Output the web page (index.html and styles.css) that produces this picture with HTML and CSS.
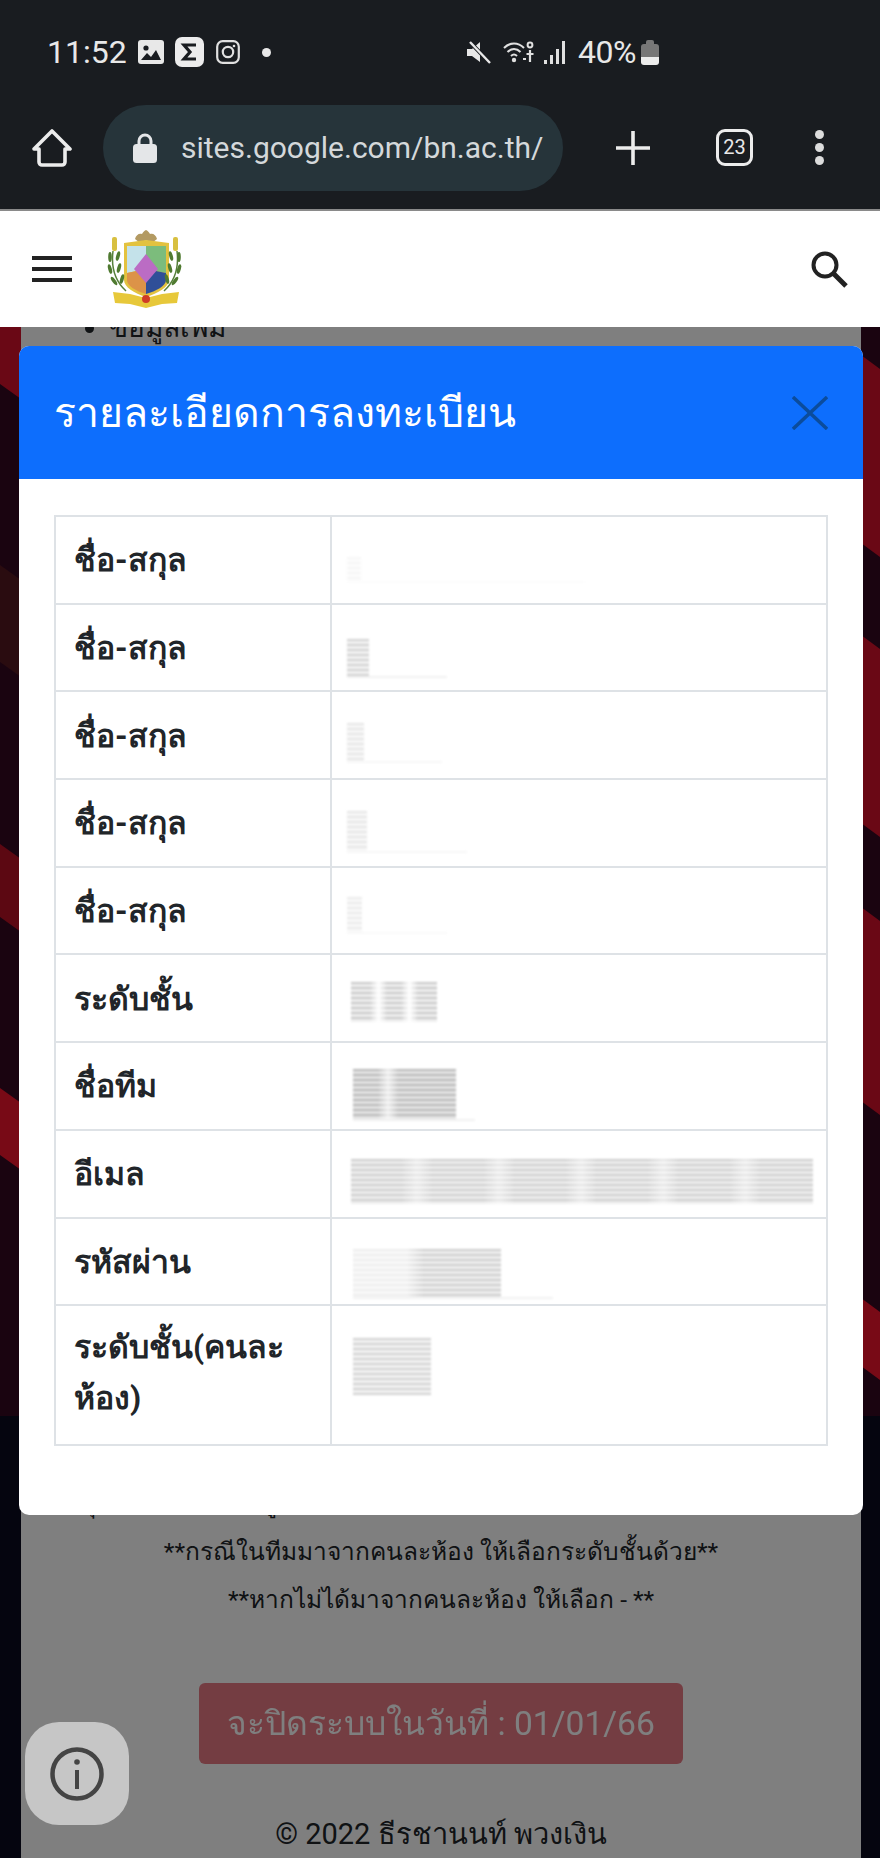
FILE: index.html
```html
<!DOCTYPE html>
<html>
<head>
    <title>รายละเอียดการลงทะเบียน</title>
    <meta charset="utf-8">
    <link rel="stylesheet" href="styles.css">
</head>
<body>
    <div class="chrome">
        <div class="status">
            <span class="time">11:52</span>
            <svg class="ic-gallery" viewBox="0 0 26 24"><rect width="26" height="24" rx="3" fill="#e8e8e8"/><circle cx="8" cy="8" r="2.6" fill="#191c20"/><path d="M3 20l6-7 4 4 5-7 5 10z" fill="#191c20"/></svg>
            <svg class="ic-sigma" viewBox="0 0 29 30"><rect width="29" height="30" rx="7" fill="#ececec"/><path d="M21 8H9l6 7-6 7h12" fill="none" stroke="#191c20" stroke-width="3.2"/></svg>
            <svg class="ic-insta" viewBox="0 0 24 24"><rect x="1.2" y="1.2" width="21.6" height="21.6" rx="5.5" fill="none" stroke="#e0e0e0" stroke-width="2.2"/><circle cx="12" cy="12" r="5.2" fill="none" stroke="#e0e0e0" stroke-width="2.2"/><circle cx="18" cy="6" r="1.3" fill="#e0e0e0"/></svg>
            <span class="dot"></span>
            <svg class="ic-mute" viewBox="0 0 25 23"><path d="M1 8h5l8-7v20l-8-6H1z" fill="#e8e8e8"/><path d="M3 0l21 22" stroke="#191c20" stroke-width="4"/><path d="M4 1l20 21" stroke="#e8e8e8" stroke-width="2.4"/></svg>
            <svg class="ic-wifi" viewBox="0 0 32 22"><g fill="none" stroke="#e0e0e0" stroke-width="2"><path d="M1 7c6-6 14-6 20 0"/><path d="M4.500 11c4-4 9-4 13 0"/><path d="M8 15c2-2 4-2 6 0"/><circle cx="27" cy="4" r="2.400"/></g><circle cx="11" cy="19" r="2.200" fill="#e0e0e0"/><path d="M27 9v12M23.500 13h7M20 18h3" stroke="#e0e0e0" stroke-width="2.200"/></svg>
            <svg class="ic-signal" viewBox="0 0 23 23"><path d="M1 19h3v4H1zM7 14h3v9H7zM13 8h3v15h-3zM19 0h3v23h-3z" fill="#e0e0e0"/></svg>
            <span class="level">40%</span>
            <span class="battery"></span>
        </div>
        <div class="toolbar">
            <svg class="ic-home" viewBox="0 0 40 38"><path d="M2 20L20 2l18 18h-5v13a3 3 0 0 1-3 3H10a3 3 0 0 1-3-3V20z" fill="none" stroke="#ececec" stroke-width="3.600" stroke-linejoin="round"/></svg>
            <div class="url">
                <svg class="ic-lock" viewBox="0 0 24 30"><path d="M6 13V8a6 6 0 0 1 12 0v5" fill="none" stroke="#e4e6e8" stroke-width="3"/><rect y="11" width="24" height="19" rx="3.500" fill="#e4e6e8"/></svg>
                <span>sites.google.com/bn.ac.th/</span>
            </div>
            <svg class="ic-plus" viewBox="0 0 34 34"><path d="M17 0v34M0 17h34" stroke="#ececec" stroke-width="3.600"/></svg>
            <div class="tabs">23</div>
            <div class="more"><span></span><span></span><span></span></div>
        </div>
    </div>

    <header class="site-header">
        <div class="burger"><span></span><span></span><span></span></div>
        <svg class="crest" viewBox="0 0 75 80">
            <path d="M39 1c-2 1-3 2-4 4-3-1-6 1-7 5l5 4 6-3 6 3 5-4c-1-4-4-6-7-5-1-2-2-3-4-4z" fill="#b39a62"/>
            <path d="M17 14l22-3 23 3v37c0 7-11 13-23 17-12-4-22-10-22-17z" fill="#e3c23f"/>
            <path d="M20 17h19v23L20 44z" fill="#c4e2ea"/>
            <path d="M39 17h20v27l-20-4z" fill="#7cbc7c"/>
            <path d="M20 44l19-4v25c-10-3-19-8-19-14z" fill="#dc9348"/>
            <path d="M39 40l20 4v7c0 6-10 11-20 14z" fill="#2f4f98"/>
            <path d="M39 25l12 15-12 14-12-14z" fill="#bb6cc4"/>
            <g fill="none" stroke="#56803a" stroke-width="1.500">
                <path d="M6 22c-2 16 2 30 13 40"/>
                <path d="M70 22c2 16-2 30-13 40"/>
            </g>
            <g fill="#4f7a30">
                <ellipse cx="3" cy="28" rx="1.800" ry="5"/><ellipse cx="11" cy="27" rx="1.800" ry="5" transform="rotate(15 11 27)"/>
                <ellipse cx="3" cy="40" rx="1.800" ry="5" transform="rotate(-15 3 40)"/><ellipse cx="12" cy="39" rx="1.800" ry="5" transform="rotate(15 12 39)"/>
                <ellipse cx="7" cy="52" rx="1.800" ry="5" transform="rotate(-35 7 52)"/><ellipse cx="15" cy="50" rx="1.800" ry="5" transform="rotate(15 15 50)"/>
                <ellipse cx="72" cy="28" rx="1.800" ry="5"/><ellipse cx="64" cy="27" rx="1.800" ry="5" transform="rotate(-15 64 27)"/>
                <ellipse cx="72" cy="40" rx="1.800" ry="5" transform="rotate(15 72 40)"/><ellipse cx="63" cy="39" rx="1.800" ry="5" transform="rotate(-15 63 39)"/>
                <ellipse cx="68" cy="52" rx="1.800" ry="5" transform="rotate(35 68 52)"/><ellipse cx="60" cy="50" rx="1.800" ry="5" transform="rotate(-15 60 50)"/>
            </g>
            <rect x="5" y="8" width="5" height="14" rx="2" fill="#d8c040"/>
            <rect x="66" y="8" width="5" height="14" rx="2" fill="#d8c040"/>
            <path d="M6 63l17 2 16 4 16-4 17-2-2 11-15 1-16 4-16-4-15-1z" fill="#e7c83a"/>
            <circle cx="39" cy="70" r="4" fill="#cf3b26"/>
        </svg>
        <svg class="ic-search" viewBox="0 0 38 38"><circle cx="15" cy="15" r="11.500" fill="none" stroke="#222" stroke-width="4"/><path d="M23 23l13 13" stroke="#222" stroke-width="5"/></svg>
    </header>

    <div class="page">
        <svg class="bands" viewBox="0 0 880 1531">
            <rect width="880" height="1089" fill="#340820"/>
            <rect y="1089" width="880" height="442" fill="#0a0a1e"/>
            <path d="M0 0h21v72L0 57z" fill="#d4102a"/>
            <path d="M0 238l21 15v97l-21-15z" fill="#541820"/>
            <path d="M0 517l21 15v73l-21-15z" fill="#b81024"/>
            <path d="M0 761l21 15v67l-21-15z" fill="#f0142c"/>
            <path d="M861 28l19 14v188l-19-14z" fill="#d4102a"/>
            <path d="M861 308l19 14v188l-19-14z" fill="#d4102a"/>
            <path d="M861 580l19 14v194l-19-14z" fill="#d4102a"/>
            <path d="M861 971l19 14v68l-19-14z" fill="#f0142c"/>
        </svg>
        <div class="card">
            <ul class="extra">
                <li>ข้อมูลเพิ่ม</li>
            </ul>
            <div class="notes">
                <p>ทุกคนในทีมต้องอยู่ในระดับชั้นเดียวกันและมาจากห้องเดียวกันทั้งหมด</p>
                <p>**กรณีในทีมมาจากคนละห้อง ให้เลือกระดับชั้นด้วย**</p>
                <p>**หากไม่ได้มาจากคนละห้อง ให้เลือก - **</p>
            </div>
            <div class="closing">จะปิดระบบในวันที่ : 01/01/66</div>
            <footer class="copy">© 2022 ธีรชานนท์ พวงเงิน</footer>
        </div>
        <div class="backdrop"></div>

        <div class="modal">
            <div class="modal-head">
                <h1>รายละเอียดการลงทะเบียน</h1>
                <svg class="ic-close" viewBox="0 0 36 34"><path d="M1 1l34 32M35 1L1 33" stroke="#0b4c9c" stroke-width="3.400"/></svg>
            </div>
            <div class="modal-body">
                <table>
                    <tr><th>ชื่อ-สกุล</th><td><div class="smear s1"></div></td></tr>
                    <tr><th>ชื่อ-สกุล</th><td><div class="smear s2"></div></td></tr>
                    <tr><th>ชื่อ-สกุล</th><td><div class="smear s3"></div></td></tr>
                    <tr><th>ชื่อ-สกุล</th><td><div class="smear s4"></div></td></tr>
                    <tr><th>ชื่อ-สกุล</th><td><div class="smear s5"></div></td></tr>
                    <tr><th>ระดับชั้น</th><td><div class="smear s6"></div></td></tr>
                    <tr><th>ชื่อทีม</th><td><div class="smear s7"></div></td></tr>
                    <tr><th>อีเมล</th><td><div class="smear s8"></div></td></tr>
                    <tr><th>รหัสผ่าน</th><td><div class="smear s9"></div></td></tr>
                    <tr class="tall"><th>ระดับชั้น(คนละ<br>ห้อง)</th><td><div class="smear s10"></div></td></tr>
                </table>
            </div>
        </div>

        <div class="info">
            <svg viewBox="0 0 54 54"><circle cx="27" cy="27" r="24.500" fill="none" stroke="#444" stroke-width="4.500"/><circle cx="27" cy="15" r="2.800" fill="#444"/><path d="M27 23v19" stroke="#444" stroke-width="4"/></svg>
        </div>
    </div>
</body>
</html>
```

FILE: styles.css
```css
body {
    margin: 0;
    width: 880px;
    height: 1858px;
    overflow: hidden;
    display: flex;
    flex-direction: column;
    font-family: Roboto, "Noto Sans", "DejaVu Sans", sans-serif;
    color: #212529;
}

/* phone status bar and browser toolbar */
.chrome {
    height: 209px;
    flex: none;
    background-color: #191c20;
    color: #e8e8e8;
}
.status {
    height: 104px;
    box-sizing: border-box;
    padding-left: 47px;
    display: flex;
    align-items: center;
}
.time {
    width: 91px;
    font-size: 32px;
}
.ic-gallery { width: 26px; height: 24px; }
.ic-sigma { width: 29px; height: 30px; margin-left: 11px; }
.ic-insta { width: 24px; height: 24px; margin-left: 12px; }
.dot {
    width: 9px;
    height: 9px;
    margin-left: 22px;
    border-radius: 50%;
    background-color: #e8e8e8;
}
.ic-mute { width: 25px; height: 23px; margin-left: 195px; }
.ic-wifi { width: 32px; height: 22px; margin-left: 12px; }
.ic-signal { width: 23px; height: 23px; margin-left: 8px; }
.level {
    margin-left: 12px;
    font-size: 32px;
    letter-spacing: -0.5px;
}
.battery {
    position: relative;
    width: 18px;
    height: 21px;
    margin-top: 4px;
    margin-left: 5px;
    border-radius: 3px;
    background: linear-gradient(#777 62%, #ececec 62%);
}
.battery::before {
    content: "";
    position: absolute;
    top: -4px;
    left: 5px;
    width: 8px;
    height: 4px;
    border-radius: 2px 2px 0 0;
    background-color: #777;
}
.toolbar {
    height: 105px;
    display: flex;
    align-items: center;
}
.ic-home { width: 40px; height: 38px; margin-left: 32px; margin-top: -18px; }
.url {
    width: 460px;
    height: 86px;
    margin-top: -18px;
    margin-left: 31px;
    box-sizing: border-box;
    padding-left: 30px;
    display: flex;
    align-items: center;
    gap: 24px;
    border-radius: 43px;
    background-color: #26343a;
    font-size: 30px;
    color: #d4d8da;
    white-space: nowrap;
}
.ic-lock { width: 24px; height: 30px; }
.ic-plus { width: 34px; height: 34px; margin-left: 53px; margin-top: -18px; }
.tabs {
    width: 37px;
    height: 37px;
    margin-left: 66px;
    margin-top: -18px;
    box-sizing: border-box;
    border: 3.5px solid #ececec;
    border-radius: 9px;
    font-size: 20px;
    line-height: 30px;
    text-align: center;
}
.more {
    margin-left: 62px;
    margin-top: -18px;
    display: flex;
    flex-direction: column;
    gap: 4px;
}
.more span {
    width: 9px;
    height: 9px;
    border-radius: 50%;
    background-color: #dcdcdc;
}

/* site header */
.site-header {
    height: 118px;
    flex: none;
    box-sizing: border-box;
    border-top: 2px solid #8a8a8a;
    padding: 0 32px;
    display: flex;
    align-items: center;
    background-color: #fff;
    position: relative;
    z-index: 3;
}
.burger {
    width: 40px;
    display: flex;
    flex-direction: column;
    gap: 7px;
}
.burger span {
    height: 4px;
    background-color: #222;
}
.crest {
    width: 75px;
    height: 80px;
    margin-left: 35px;
    filter: blur(0.7px);
}
.ic-search {
    width: 38px;
    height: 38px;
    margin-left: auto;
}

/* page behind the dialog */
.page {
    flex: 1;
    position: relative;
    overflow: hidden;
}
.bands {
    position: absolute;
    top: 0;
    left: 0;
    width: 880px;
    height: 1531px;
}
.card {
    position: absolute;
    top: 0;
    bottom: 0;
    left: 21px;
    width: 840px;
    display: flex;
    flex-direction: column;
    align-items: center;
    background-color: #fff;
}
.extra {
    align-self: flex-start;
    margin: -17px 0 0;
    padding-left: 88px;
    font-size: 28px;
    line-height: 36px;
}
.notes {
    margin-top: auto;
    font-size: 24.5px;
    line-height: 48px;
    text-align: center;
    white-space: nowrap;
}
.notes p {
    margin: 0;
}
.closing {
    height: 81px;
    margin-top: 59px;
    padding: 0 28px;
    border-radius: 6px;
    background-color: #dc3545;
    opacity: 0.65;
    color: #fff;
    font-size: 33.6px;
    line-height: 81px;
}
.copy {
    margin-top: 46px;
    font-size: 29px;
    line-height: 48px;
}
.backdrop {
    position: absolute;
    top: 0;
    right: 0;
    bottom: 0;
    left: 0;
    background-color: rgba(0, 0, 0, 0.5);
}

/* dialog */
.modal {
    position: absolute;
    top: 19px;
    left: 19px;
    width: 844px;
    border-radius: 10px;
    overflow: hidden;
    background-color: #fff;
}
.modal-head {
    height: 133px;
    box-sizing: border-box;
    padding: 0 35px;
    display: flex;
    align-items: center;
    justify-content: space-between;
    background-color: #0d6efd;
}
.modal-head h1 {
    margin: 0;
    font-size: 41px;
    font-weight: 400;
    color: #fff;
}
.ic-close {
    width: 36px;
    height: 34px;
}
.modal-body {
    padding: 36px 35px 69px;
}
table {
    width: 100%;
    border-collapse: collapse;
    table-layout: fixed;
}
th, td {
    height: 87.7px;
    box-sizing: border-box;
    border: 2px solid #dee2e6;
    padding: 0 0 0 18px;
}
th {
    width: 276px;
    padding-top: 2px;
    font-size: 32px;
    font-weight: 700;
    line-height: 51px;
    text-align: left;
}
td {
    padding-left: 15px;
    vertical-align: top;
}
.tall th, .tall td {
    height: 140px;
}
.tall th {
    vertical-align: top;
    padding-top: 16px;
}

/* redacted values */
.smear {
    position: relative;
    filter: blur(1.1px);
    background: repeating-linear-gradient(#d2d2d2 0 2px, #f2f2f2 2px 5px);
}
.smear::after {
    content: "";
    position: absolute;
    left: 0;
    bottom: 0;
    height: 2px;
    background-color: #f1f1f1;
}
.s1 { width: 14px; height: 26px; margin-top: 40px; opacity: 0.2; }
.s1::after { width: 238px; }
.s2 { width: 22px; height: 39px; margin-top: 34px; }
.s2::after { width: 100px; }
.s3 { width: 17px; height: 40px; margin-top: 31px; opacity: 0.55; }
.s3::after { width: 95px; }
.s4 { width: 20px; height: 42px; margin-top: 31px; opacity: 0.55; }
.s4::after { width: 120px; }
.s5 { width: 15px; height: 37px; margin-top: 29px; opacity: 0.45; }
.s5::after { width: 100px; }
.s6 {
    width: 86px;
    height: 40px;
    margin-top: 27px;
    margin-left: 4px;
    background:
        linear-gradient(90deg, transparent 22%, #fff 32%, transparent 42% 58%, #fff 68%, transparent 78%),
        repeating-linear-gradient(#c8c8c8 0 2px, #efefef 2px 5px);
}
.s6::after { display: none; }
.s7 {
    width: 103px;
    height: 52px;
    margin-top: 26px;
    margin-left: 6px;
    background:
        linear-gradient(90deg, transparent 24%, rgba(255, 255, 255, 0.7) 34%, transparent 44%),
        repeating-linear-gradient(#b8b8b8 0 2px, #e4e4e4 2px 5px);
}
.s7::after { width: 122px; }
.s8 {
    width: 462px;
    height: 45px;
    margin-top: 28px;
    margin-left: 4px;
    background:
        repeating-linear-gradient(90deg, transparent 0 50px, rgba(255, 255, 255, 0.5) 66px, transparent 82px),
        repeating-linear-gradient(#cdcdcd 0 2px, #eeeeee 2px 5px);
}
.s8::after { display: none; }
.s9 {
    width: 148px;
    height: 50px;
    margin-top: 30px;
    margin-left: 6px;
    background:
        linear-gradient(90deg, rgba(255, 255, 255, 0.65) 36%, transparent 48%),
        repeating-linear-gradient(#cccccc 0 2px, #efefef 2px 5px);
}
.s9::after { width: 200px; }
.s10 { width: 78px; height: 57px; margin-top: 32px; margin-left: 6px; }
.s10::after { display: none; }

/* floating info button */
.info {
    position: absolute;
    left: 25px;
    top: 1395px;
    width: 104px;
    height: 103px;
    display: flex;
    align-items: center;
    justify-content: center;
    border-radius: 34px;
    background-color: #c6c6c6;
    z-index: 2;
}
.info svg {
    width: 54px;
    height: 54px;
}
```
